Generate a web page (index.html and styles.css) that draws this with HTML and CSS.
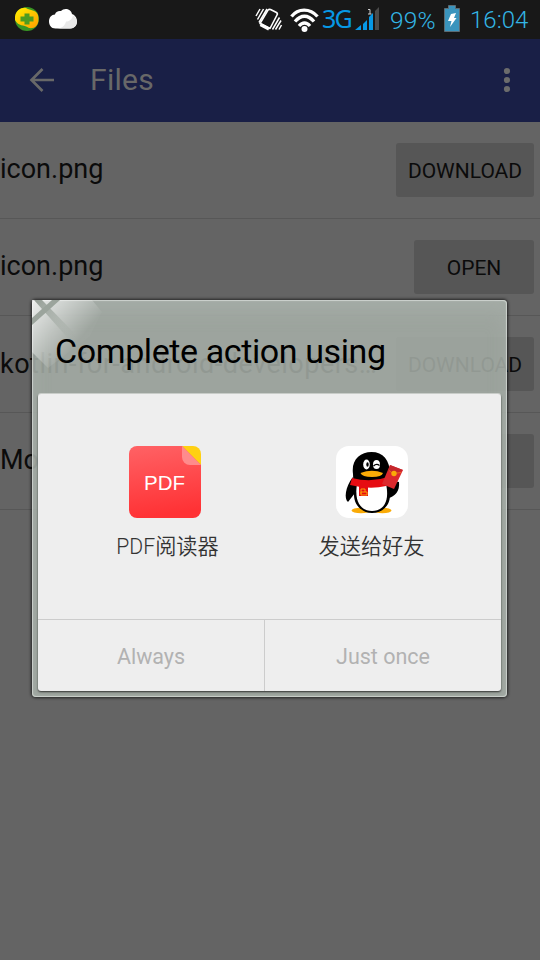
FILE: index.html
```html
<!DOCTYPE html>
<html lang="en">
<head>
<meta charset="utf-8">
<title>Files</title>
<link rel="stylesheet" href="styles.css">
</head>
<body>
<div class="screen">
  <div class="status">
    <svg class="notif" width="64" height="39" viewBox="0 0 64 39">
      <defs><linearGradient id="gold" x1="0" y1="0" x2="1" y2="1"><stop stop-color="#fff200"/><stop offset="1" stop-color="#ff9c00"/></linearGradient></defs>
      <circle cx="12" cy="19" r="12" fill="#389523"/>
      <path d="M0 20C-1 11 6 7 11 8C16 11 20 9 23 15C25 25 20 29 14 28C8 24 4 27 0 20Z" fill="url(#gold)"/>
      <path d="M9.500 13.500h5v3h4v5h-4v3h-5v-3h-4v-5h4Z" fill="#4e9c20"/>
      <path d="M40.500 28.500C36 28.500 34 25 34 21.500c0-4 2.500-7 6-7 .5-2.500 3-4 6-3.500C49 7.500 56 8.500 57 14c3 1 5 4 5 7.500 0 4-3 7-7 7Z" fill="#fff"/>
      <path d="M42 28.500c5 0 8-3 9-7 3 0 6-2 7-6 5 2 6 12-2 13Z" fill="#e9e9e9"/>
    </svg>
    <svg class="signals" width="66" height="39" viewBox="0 0 66 39">
      <g fill="none" stroke="#fff">
        <path d="M13 10Q14 9 15.500 9.500L21.500 12.500Q23 13.500 22 15L15 28.500 5 23.500Z" stroke-width="1.600" stroke-linejoin="round"/>
        <path d="M5.500 24.500l8.500 4.500" stroke-width="3.500"/>
        <path d="M1 16l4-7M2.500 19.500l6-10.500M4 22.500l8-13.500M17.500 29.500l7-12M20.500 29.500l5.500-9M24 29.500l2.500-4.500" stroke-width="1.500"/>
        <path d="M36.500 16.500C43 8 55 8 62.500 16.500M40 21.500C46 14.500 53 14.500 59 21.500M44 26c3.500-4 7.500-4 11 0" stroke-width="3.300"/>
      </g>
      <circle cx="49.500" cy="29" r="3" fill="#fff"/>
    </svg>
    <span class="net">3G</span>
    <svg class="bars" width="26" height="39" viewBox="0 0 26 39">
      <path d="M0 30l6-5v5ZM8 24l4-4v10H8ZM14 17l4-4v17h-4Z" fill="#0798e5"/>
      <path d="M20 11l4-4v23h-4Z" fill="#4a4a4a"/>
      <path d="M13 9.500h2V14M13 14h3.500" fill="none" stroke="#ccc" stroke-width="1"/>
    </svg>
    <span class="pct">99%</span>
    <svg class="battery" width="16" height="39" viewBox="0 0 16 39">
      <path d="M4.500 5.500h7v3h4v23h-15v-23h4Z" fill="#3a94bd" stroke="#5c6b73"/>
      <path d="M7 14l5-1-2 5h2.500L6 27l1.500-6H4Z" fill="#fff"/>
    </svg>
    <span class="time">16:04</span>
  </div>
  <div class="appbar">
    <svg class="back" width="26" height="26" viewBox="0 0 26 26"><path d="M25 13H3M13.500 2L2.500 13l11 11" fill="none" stroke="#686868" stroke-width="2.700"/></svg>
    <span class="title">Files</span>
    <svg class="more" width="8" height="26" viewBox="0 0 8 26"><g fill="#6c6c6c"><circle cx="4" cy="4" r="3.100"/><circle cx="4" cy="13" r="3.100"/><circle cx="4" cy="22" r="3.100"/></g></svg>
  </div>
  <div class="row"><span class="name">icon.png</span><span class="btn wide">DOWNLOAD</span></div>
  <div class="row"><span class="name">icon.png</span><span class="btn">OPEN</span></div>
  <div class="row"><span class="name long">kotlin-for-android-developers…</span><span class="btn wide">DOWNLOAD</span></div>
  <div class="row"><span class="name">Mo</span><span class="btn"></span></div>

  <div class="dialog">
    <svg class="glare" width="70" height="80" viewBox="0 0 70 80">
      <defs>
        <linearGradient id="shine" x1="0" y1="0" x2="1" y2=".8"><stop stop-color="#fff" stop-opacity=".8"/><stop offset=".7" stop-color="#fff" stop-opacity=".02"/></linearGradient>
        <linearGradient id="fade" gradientUnits="userSpaceOnUse" x1="0" y1="10" x2="42" y2="40"><stop stop-color="#98a199"/><stop offset="1" stop-color="#9da69e" stop-opacity="0"/></linearGradient>
      </defs>
      <path d="M0 0H60L70 12 58 36 16 68 0 52Z" fill="url(#shine)"/>
      <path d="M2 0H10L48 39 42 45Z" fill="url(#fade)"/>
      <path d="M20 0H28L0 25V18Z" fill="#9ba49c"/>
    </svg>
    <div class="heading">Complete action using</div>
    <div class="panel">
      <div class="apps">
        <div class="app pdf">
          <svg width="72" height="72" viewBox="0 0 72 72">
            <defs><linearGradient id="red" x1="0" y1="0" x2=".15" y2="1"><stop stop-color="#ff6265"/><stop offset="1" stop-color="#ff3235"/></linearGradient></defs>
            <path d="M8 0H54L72 18V64a8 8 0 0 1-8 8H8a8 8 0 0 1-8-8V8a8 8 0 0 1 8-8Z" fill="url(#red)"/>
            <path d="M53 0H64a8 8 0 0 1 8 8V19Z" fill="#ffd012"/>
            <path d="M53 0L72 19H61a8 8 0 0 1-8-8Z" fill="#ff8b8c"/>
            <text x="15" y="43.500" class="badge" textLength="41" lengthAdjust="spacingAndGlyphs">PDF</text>
          </svg>
          <span class="label first">PDF阅读器</span>
        </div>
        <div class="app qq">
          <svg width="72" height="72" viewBox="0 0 72 72">
            <rect width="72" height="72" rx="13" fill="#fff"/>
            <ellipse cx="25" cy="64.500" rx="9.500" ry="2.800" fill="#faab07"/><ellipse cx="46.500" cy="64.500" rx="9" ry="2.800" fill="#faab07"/>
            <path d="M17 31C9 41 8 53 12 56l7-9M51 40l6-5 6 1c1 9-4 15-11 16Z"/>
            <path d="M17 28C15 14 24 6 35.500 6S54 14 54 28V49C54 60 46 67 36 67S18 59 18 49Z"/>
            <path d="M21 38H50C54 56 47 65 36 65S18 56 21 38Z" fill="#fff"/>
            <path d="M16 32Q35 37 52 31L50 40Q34 44 14 39Z" fill="#e60c12"/>
            <path d="M23 39h9v11h-9Z" fill="#e60c12"/>
            <path d="M25 43h4v3h-4v3h6v-3h-2M25 43v5" fill="none" stroke="#faa008" stroke-width="1"/>
            <ellipse cx="30.500" cy="18.500" rx="3.300" ry="5" fill="#fff"/><ellipse cx="40.500" cy="18.500" rx="3.500" ry="4.500" fill="#fff"/>
            <ellipse cx="31.500" cy="18.500" rx="1.200" ry="2.200"/><path d="M37.500 20q3-3 6-.5" fill="none" stroke="#000" stroke-width="1.300"/>
            <path d="M24.500 27Q36 22.500 47 27Q46 31 36 31T24.500 27Z" fill="#faab07"/>
            <path d="M54 19L67 24 58 43 46 38Z" fill="#dc292d"/><path d="M54 19L67 24 59 28 52 25Z" fill="#c5272c"/>
            <path d="M53 24.500l4 3 8-1" fill="none" stroke="#e87b20" stroke-width=".8"/><circle cx="58" cy="27.500" r="2.700" fill="#faab07"/>
          </svg>
          <span class="label">发送给好友</span>
        </div>
      </div>
      <div class="actions"><span class="always">Always</span><span class="once">Just once</span></div>
    </div>
  </div>
</div>
</body>
</html>
```
FILE: styles.css
```css
* { box-sizing: border-box; }
body { margin: 0; font-family: Roboto, "Noto Sans CJK SC", sans-serif; }
.screen { position: relative; width: 540px; height: 960px; overflow: hidden; background: #646464; color: #0b0b0b; }
.status { display: flex; align-items: center; height: 39px; background: #181818; color: #33b5e5; white-space: nowrap; }
.status svg { flex: none; }
.notif { margin-left: 15px; }
.signals { margin-left: 176px; }
.net { width: 33px; padding: 0 0 2px 1px; font: 25px/37px "Noto Sans", sans-serif; letter-spacing: -1.8px; color: #0798e5; }
.bars { margin-left: 1px; }
.pct { width: 62px; padding-left: 9px; font-size: 24.500px; letter-spacing: .2px; }
.battery { margin-left: 1px; }
.time { margin-left: 10px; font-size: 24px; letter-spacing: 0; }
.pct, .time { font-family: Roboto, sans-serif; font-weight: 350; line-height: 39px; padding-top: 1px; }
.appbar { display: flex; align-items: center; height: 83px; padding: 0 0 2px 29px; background: #191f46; color: #686868; }
.title { margin-left: 35px; font-size: 30px; letter-spacing: .3px; }
.more { margin-left: auto; margin-right: 29px; }
.row { display: flex; align-items: center; justify-content: space-between; height: 97px; padding-right: 6px; border-bottom: 1px solid #575757; }
.name { font-size: 27px; line-height: 32px; padding-bottom: 2px; white-space: nowrap; }
.long { letter-spacing: .5px; padding-bottom: 0; }
.btn { display: flex; align-items: center; justify-content: center; width: 120px; height: 54px; padding-top: 2px; border-radius: 3px; background: #565656; font-size: 21px; }
.wide { width: 138px; }
.dialog { position: absolute; left: 32px; top: 300px; width: 475px; height: 397px; padding: 94px 6px 6px; border-radius: 4px; background: rgba(165, 174, 166, .87); box-shadow: 0 0 3px 1px rgba(0, 0, 0, .65), inset 0 0 1px 1px rgba(235, 240, 235, .6), inset 0 12px 18px rgba(179, 187, 180, .35); }
.glare { position: absolute; left: 0; top: 0; }
.heading { position: absolute; left: 23px; top: 30px; font-size: 34px; line-height: 42px; letter-spacing: -.4px; color: #000; white-space: nowrap; }
.panel { height: 297px; border-radius: 3px; background: #eee; box-shadow: 0 1px 2px rgba(0, 0, 0, .7), 0 -1px 0 #d0d4d0; }
.apps { display: flex; height: 225px; padding: 52px 25px 0 23px; }
.app { display: flex; flex-direction: column; align-items: center; width: 207px; }
.app svg { flex: none; }
.label { margin-top: 11px; font-size: 21.200px; line-height: 36px; color: #333; white-space: nowrap; font-weight: 350; }
.first { padding-left: 6px; }
.badge { font: 20px "Liberation Sans", sans-serif; fill: #fff; }
.actions { display: flex; height: 72px; border-top: 1px solid #ccc; color: #b2b2b2; font-size: 21.500px; line-height: 74px; text-align: center; }
.always { width: 227px; border-right: 1px solid #ccc; }
.once { flex: 1; }
```
